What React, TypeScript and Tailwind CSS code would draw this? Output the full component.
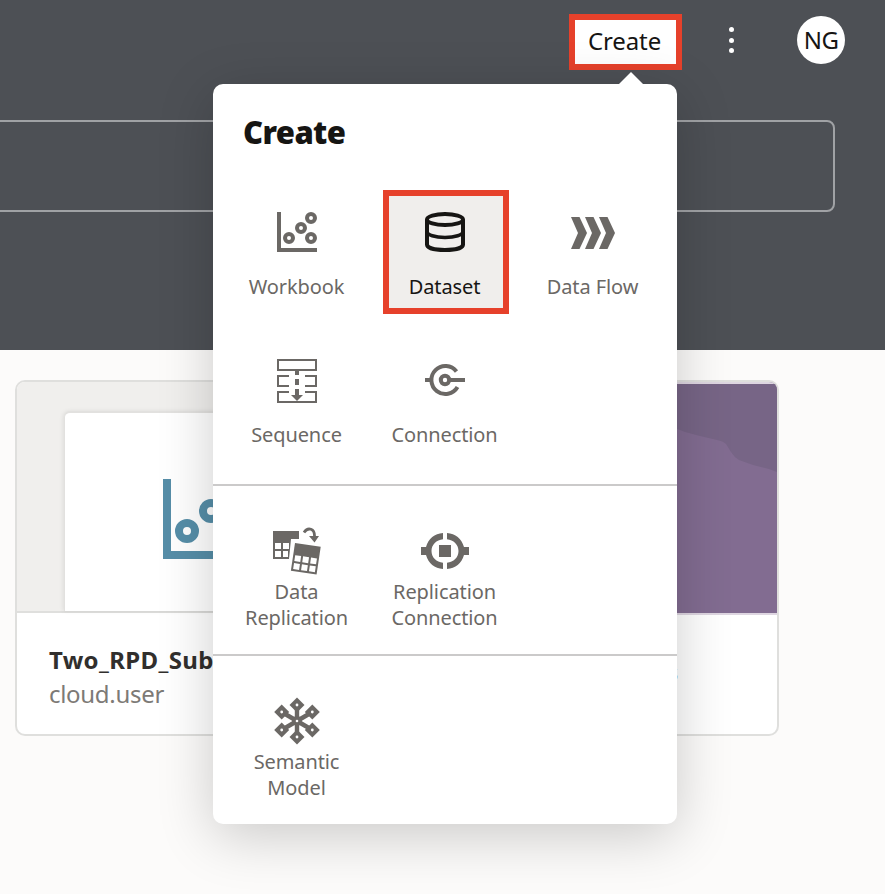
import React from "react";

function WorkbookIcon({ size }: { size: number }) {
  return (
    <svg width={size} height={size} viewBox="0 0 40 40" className="shrink-0">
      <path d="M0 0h4v36h36v4H0z" fill="currentColor" />
      <g fill="none" stroke="currentColor" strokeWidth="4">
        <circle cx="12" cy="26" r="4" />
        <circle cx="24" cy="16" r="4" />
        <circle cx="34" cy="6" r="4" />
        <circle cx="34" cy="26" r="4" />
      </g>
    </svg>
  );
}

function DatasetIcon() {
  return (
    <svg width="48" height="48" viewBox="0 0 48 48" fill="none" stroke="currentColor" strokeWidth="4">
      <ellipse cx="24" cy="11.500" rx="18" ry="5.500" />
      <path d="M6 11.500v25c0 3.200 7 5.500 18 5.500s18-2.300 18-5.500v-25" />
      <path d="M6 23.500c0 3.500 8 6 18 6s18-2.500 18-6" strokeWidth="3.600" />
    </svg>
  );
}

function DataFlowIcon() {
  return (
    <svg width="48" height="48" viewBox="0 0 48 48" fill="currentColor">
      <path d="M2 9h8.500l7.500 16-7.500 16H2l7-16z M16 9h8.500l7.500 16-7.500 16H16l7-16z M30 9h8.500l7.500 16-7.500 16H30l7-16z" />
    </svg>
  );
}

function SequenceIcon() {
  return (
    <svg width="48" height="48" viewBox="0 0 48 48" fill="none" stroke="currentColor" strokeWidth="2">
      <path d="M5 4h38v10H5z M16 20H5v10h11 M32 20h11v10H32 M16 36H5v10h38V36H32" />
      <path d="M24 14v5M24 23v6M24 33v6" strokeWidth="4" />
      <path d="M18 39h12l-6 6z" fill="currentColor" stroke="none" />
    </svg>
  );
}

function ConnectionIcon() {
  return (
    <svg width="48" height="48" viewBox="0 0 48 48" fill="none" stroke="currentColor" strokeWidth="4">
      <path d="M35.500 15.500A14 14 0 1 0 36.500 31M4 24h7M29 24h15" />
      <circle cx="24" cy="24" r="4.200" />
    </svg>
  );
}

function DataReplicationIcon() {
  return (
    <svg width="48" height="48" viewBox="0 0 48 48">
      <path d="M0 4h26v8h-8l-2 20H0z" fill="currentColor" />
      <path d="M2 16h6v6H2zM10 16h6v6h-6zM2 24h6v6H2zM10 24h5v6h-5z" fill="#fff" />
      <g transform="translate(22 16) rotate(8.500)">
        <path d="M-3-3h9v6H0v29h-3z" fill="#fff" />
        <path d="M0 0h26v28H0z" fill="currentColor" />
        <path d="M2 12h6v6H2zM10 12h6v6h-6zM18 12h6v6h-6zM2 20h6v6H2zM10 20h6v6h-6zM18 20h6v6h-6z" fill="#fff" />
      </g>
      <path d="M31 5.500c4-6 11-4 10.500 4.500" fill="none" stroke="currentColor" strokeWidth="2.800" />
      <path d="M36 9h10l-4.500 6.500z" fill="currentColor" />
    </svg>
  );
}

function ReplicationConnectionIcon() {
  return (
    <svg width="48" height="48" viewBox="0 0 48 48" fill="currentColor">
      <path d="M22 6v6.200C15.500 13 10.500 17.500 10.500 24S15.500 35 22 35.800V42C13.500 41.500 7.500 36.500 5 28H0v-8h5C7.500 11.500 13.500 6.500 22 6z" />
      <path d="M26 6v6.200C32.500 13 37.500 17.500 37.500 24S32.500 35 26 35.800V42C34.500 41.500 40.500 36.500 43 28h5v-8h-5C40.500 11.500 34.500 6.500 26 6z" />
      <path d="M18 18h12v12H18z" />
    </svg>
  );
}

const modelNodes: [number, number][] = [
  [24, 8],
  [39.3, 15],
  [39.3, 33],
  [24, 40],
  [8.7, 33],
  [8.7, 15],
];

function SemanticModelIcon() {
  return (
    <svg width="48" height="48" viewBox="0 0 48 48">
      <path d="M24 8v32M8.700 15l30.600 18M39.300 15l-30.600 18" stroke="currentColor" strokeWidth="4.400" />
      <circle cx="24" cy="24" r="5" fill="currentColor" />
      {modelNodes.map(([x, y]) => (
        <g key={`${x}-${y}`} transform={`translate(${x} ${y})`}>
          <path d="M0-7.500l7.500 7.500-7.500 7.500-7.500-7.500z" fill="currentColor" />
          <circle r="1.400" fill="#fff" />
        </g>
      ))}
      <circle cx="24" cy="24" r="1.300" fill="#fff" />
    </svg>
  );
}

function Tile({ icon, label, selected = false }: { icon: React.ReactNode; label: string; selected?: boolean }) {
  return (
    <div
      className={
        selected
          ? "mr-[10px] ml-3 mt-3 flex h-[124px] flex-col items-center border-6 border-[#e6412b] bg-[#f0eeec] pt-3 pr-[2px] text-[#161513]"
          : "mx-[11px] mt-3 flex h-[124px] flex-col items-center pt-[18px] text-[#6b6865]"
      }
    >
      <div className="flex size-12 items-center justify-center">{icon}</div>
      <div className="mt-[18px] pr-px text-[20px] leading-[26px] tracking-[-0.1px] whitespace-nowrap">{label}</div>
    </div>
  );
}

function WideTile({ icon, lines }: { icon: React.ReactNode; lines: string[] }) {
  return (
    <div className="flex flex-col items-center text-[#6b6865]">
      <div className="size-12">{icon}</div>
      <div className="mt-1 pr-px text-center text-[20px] leading-[26px] tracking-[-0.1px]">
        {lines.map((line) => (
          <div key={line}>{line}</div>
        ))}
      </div>
    </div>
  );
}

function CreateMenu() {
  return (
    <div className="absolute top-[84px] left-[213px] h-[740px] w-[464px] rounded-[10px] bg-white shadow-[0_12px_56px_rgba(0,0,0,0.2)]">
      <svg className="absolute -top-3 left-[406px]" width="24" height="12" viewBox="0 0 24 12">
        <path d="M0 12L12 0l12 12z" fill="#fff" />
      </svg>
      <section className="h-[402px] border-b-2 border-[#cbcaca] px-2.5 pt-[27px]">
        <h2 className="h-[67px] pl-5 text-[31px] leading-[42px] font-black tracking-[-0.6px] text-[#161513]">Create</h2>
        <div className="grid grid-cols-3 auto-rows-[148px]">
          <Tile icon={<WorkbookIcon size={40} />} label="Workbook" />
          <Tile icon={<DatasetIcon />} label="Dataset" selected />
          <Tile icon={<DataFlowIcon />} label="Data Flow" />
          <Tile icon={<SequenceIcon />} label="Sequence" />
          <Tile icon={<ConnectionIcon />} label="Connection" />
        </div>
      </section>
      <section className="grid h-[170px] grid-cols-3 border-b-2 border-[#cbcaca] px-2.5 pt-[41px]">
        <WideTile icon={<DataReplicationIcon />} lines={["Data", "Replication"]} />
        <WideTile icon={<ReplicationConnectionIcon />} lines={["Replication", "Connection"]} />
      </section>
      <section className="grid grid-cols-3 px-2.5 pt-[40.500px]">
        <WideTile icon={<SemanticModelIcon />} lines={["Semantic", "Model"]} />
      </section>
    </div>
  );
}

export default function App() {
  return (
    <div className="relative h-[894px] w-[885px] overflow-hidden bg-[#fcfbfa] font-['Noto_Sans','Open_Sans',sans-serif]">
      <header className="h-[350px] bg-[#4d5055]">
        <div className="flex h-[120px] items-start justify-end pt-[14px] pr-10">
          <button className="h-14 w-[113px] border-6 border-[#e6412b] bg-white pr-0.5 text-[24px] leading-[42px] tracking-[-0.1px] text-[#161513]">
            <span className="block h-11">Create</span>
          </button>
          <div className="mt-[13px] ml-[47px] flex w-[5px] flex-col gap-[5.500px]">
            <span className="size-[5px] rounded-full bg-white" />
            <span className="size-[5px] rounded-full bg-white" />
            <span className="size-[5px] rounded-full bg-white" />
          </div>
          <div className="mt-0.5 ml-[63px] flex size-12 items-center justify-center rounded-full bg-white text-[24px] tracking-[-0.5px] text-[#161513]">
            NG
          </div>
        </div>
        <div className="-ml-4 h-[92px] w-[851px] rounded-lg border-2 border-[#a0a2a5]" />
      </header>
      <main className="flex gap-6 pt-[30px] pl-[15px]">
        <article className="h-[356px] w-[370px] overflow-hidden rounded-[10px] border-2 border-[#dfdfdd] bg-white">
          <div className="h-[231px] border-b-2 border-[#dfdfdd] bg-[#f0efed] pt-[29px] pl-[47px]">
            <div className="h-[200px] w-[272px] rounded-t-md border-t-2 border-l border-[#e2e1df] bg-white pt-[66px] pl-[98px] text-[#568ea8] shadow-[-1px_0_4px_rgba(0,0,0,0.08)]">
              <WorkbookIcon size={80} />
            </div>
          </div>
          <div className="pt-[30px] pl-8 whitespace-nowrap">
            <div className="text-[24px] leading-[34px] font-bold tracking-[0.35px] text-[#312f2d]">Two_RPD_Sub</div>
            <div className="text-[24px] leading-[34px] tracking-[-0.3px] text-[#7d7a76]">cloud.user</div>
          </div>
        </article>
        <article className="h-[356px] w-[370px] overflow-hidden rounded-[10px] border-2 border-[#dfdfdd] bg-white">
          <div className="h-[233px] border-y-2 border-[#ded6e1] bg-[#826c91]">
            <svg width="366" height="229" viewBox="0 0 366 229">
              <path d="M0 0h366v88l-8-3-16-4-14-5q-5-3-8-8l-5-8q-3-3-9-4l-17-4-15-4-10-4L0 0z" fill="#776586" />
            </svg>
          </div>
          <div className="w-[267px] pt-10 text-right text-[24px] leading-[34px] font-bold text-[#312f2d]">s</div>
        </article>
      </main>
      <CreateMenu />
    </div>
  );
}
